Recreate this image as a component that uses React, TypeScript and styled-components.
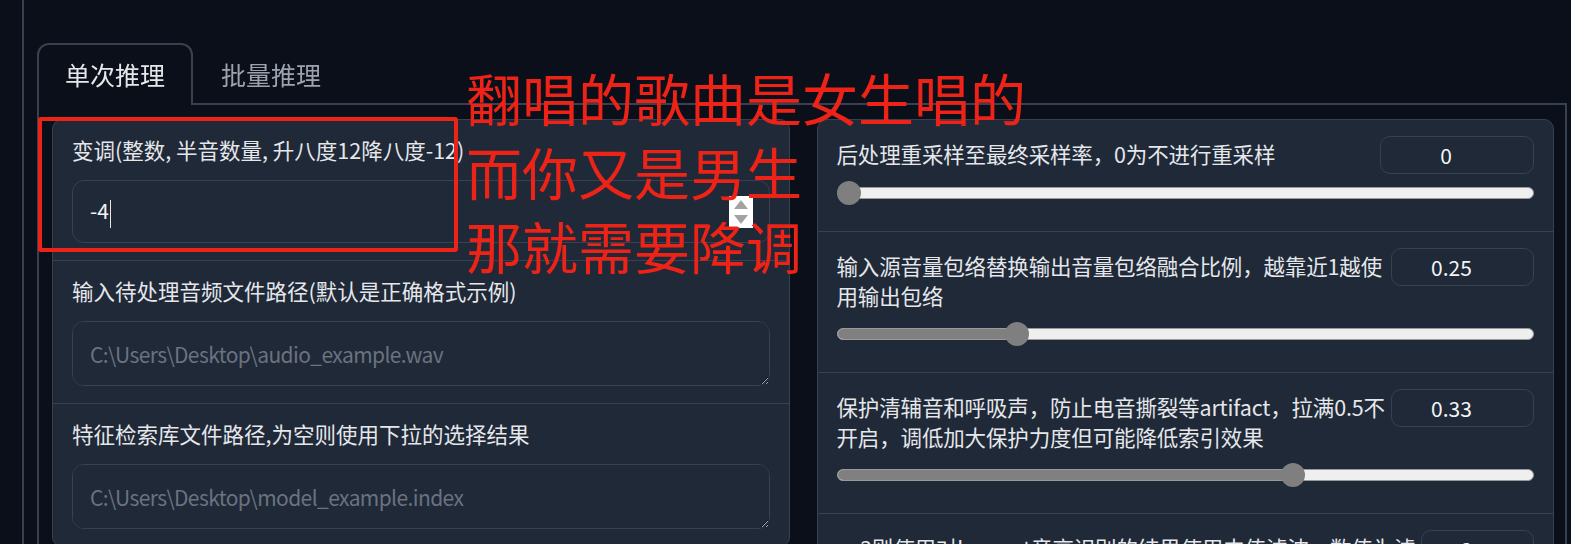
import React from 'react';
import styled, { createGlobalStyle } from 'styled-components';

const GlobalStyle = createGlobalStyle`
	* {
		box-sizing: border-box;
	}

	html,
	body {
		margin: 0;
		padding: 0;
		height: 544px;
		overflow: hidden;
		background: #0b0f19;
	}

	body {
		font-family: 'Noto Sans CJK SC', 'Noto Sans', sans-serif;
		color: #e5e7eb;
	}
`;

const border = '#374151';
const blockBg = '#1f2937';

type SliderProps = { value: number; min: number; max: number };

const Slider = ({ value, min, max }: SliderProps) => {
	const p = (value - min) / (max - min);
	return (
		<SliderWrap>
			<Track>
				<Fill style={{ width: `calc(${p} * (100% - 24px) + 12px)` }} />
			</Track>
			<Thumb style={{ left: `calc(${p} * (100% - 24px))` }} />
		</SliderWrap>
	);
};

type RangeProps = { label: string; value: string; min: number; max: number; boxWidth: number };

const RangeBlock = ({ label, value, min, max, boxWidth }: RangeProps) => (
	<Block $range>
		<Header>
			<RangeLabel>{label}</RangeLabel>
			<NumBox $width={boxWidth}>{value}</NumBox>
		</Header>
		<Slider value={parseFloat(value)} min={min} max={max} />
	</Block>
);

const App = () => {
	return (
		<Page>
			<GlobalStyle />
			<Frame>
				<TabList>
					<Tab $active>单次推理</Tab>
					<Tab>批量推理</Tab>
				</TabList>
				<TabPanel>
					<Card>
						<Block>
							<Label>变调(整数, 半音数量, 升八度12降八度-12)</Label>
							<NumberInput>
								<span>
									-4
									<Caret />
								</span>
								<Spinner width='24' height='32' viewBox='0 0 24 32'>
									<rect width='24' height='32' fill='#ffffff' />
									<polygon points='12,4 19,13 5,13' fill='#a3a3a3' />
									<polygon points='12,28 19,19 5,19' fill='#a3a3a3' />
								</Spinner>
							</NumberInput>
						</Block>
						<Block>
							<Label>输入待处理音频文件路径(默认是正确格式示例)</Label>
							<TextArea placeholder='C:\Users\Desktop\audio_example.wav' />
						</Block>
						<Block>
							<Label>特征检索库文件路径,为空则使用下拉的选择结果</Label>
							<TextArea placeholder='C:\Users\Desktop\model_example.index' />
						</Block>
					</Card>
					<Card>
						<RangeBlock
							label='后处理重采样至最终采样率，0为不进行重采样'
							value='0'
							min={0}
							max={48000}
							boxWidth={154}
						/>
						<RangeBlock
							label='输入源音量包络替换输出音量包络融合比例，越靠近1越使用输出包络'
							value='0.25'
							min={0}
							max={1}
							boxWidth={143}
						/>
						<RangeBlock
							label='保护清辅音和呼吸声，防止电音撕裂等artifact，拉满0.5不开启，调低加大保护力度但可能降低索引效果'
							value='0.33'
							min={0}
							max={0.5}
							boxWidth={143}
						/>
						<RangeBlock
							label='>=3则使用对harvest音高识别的结果使用中值滤波，数值为滤波半径，使用可以削弱哑音'
							value='3'
							min={0}
							max={7}
							boxWidth={113}
						/>
					</Card>
				</TabPanel>
			</Frame>

			{/* red annotation drawn over the screenshot */}
			<RedBox />
			<Note>
				<span>翻唱的歌曲是女生唱的</span>
				<span>而你又是男生</span>
				<span>那就需要降调</span>
			</Note>
		</Page>
	);
};

const Page = styled.div`
	position: relative;
	height: 544px;
	padding: 0 4px 0 22px;
`;

const Frame = styled.div`
	height: 100%;
	padding: 43px 0 0 13px;
	border-left: 2px solid ${border};
`;

const TabList = styled.div`
	display: flex;
	position: relative;
	z-index: 1;
`;

const Tab = styled.button<{ $active?: boolean }>`
	margin: 0 0 ${(p) => (p.$active ? '-2px' : '0')};
	padding: 11px 26px ${(p) => (p.$active ? '13px' : '11px')};

	font-family: inherit;
	font-size: 25px;
	line-height: 36px;
	color: ${(p) => (p.$active ? '#e5e7eb' : '#9ca3af')};

	background: ${(p) => (p.$active ? '#0b0f19' : 'transparent')};
	border: 2px solid ${(p) => (p.$active ? border : 'transparent')};
	border-bottom: none;
	border-radius: 12px 12px 0 0;
`;

const TabPanel = styled.div`
	height: 600px;
	padding: 14px 11px 0 13px;

	display: grid;
	grid-template-columns: 1fr 1fr;
	gap: 27px;
	align-items: start;

	border: 2px solid ${border};
`;

const Card = styled.div`
	background: ${blockBg};
	border: 1px solid ${border};
	border-radius: 10px;
	overflow: hidden;
`;

const Block = styled.div<{ $range?: boolean }>`
	padding: ${(p) => (p.$range ? '16px 19px 26px' : '14px 19px 17px')};

	& + & {
		border-top: 1px solid ${border};
	}
`;

const Label = styled.div`
	margin-bottom: 14px;

	font-size: 21.5px;
	line-height: 32px;
	color: #e5e7eb;
	white-space: nowrap;
`;

const NumberInput = styled.div`
	height: 63px;
	padding: 0 16px 0 17px;

	display: flex;
	align-items: center;
	justify-content: space-between;

	font-size: 21px;
	color: #f3f4f6;

	background: ${blockBg};
	border: 1px solid ${border};
	border-radius: 12px;
`;

const Caret = styled.span`
	display: inline-block;
	width: 1px;
	height: 28px;
	margin-left: 1px;
	vertical-align: middle;
	background: #e5e7eb;
`;

const Spinner = styled.svg`
	display: block;
`;

const TextArea = styled.textarea`
	display: block;
	width: 100%;
	height: 65px;
	padding: 16px 17px;

	font-family: inherit;
	font-size: 21px;
	line-height: 32px;
	letter-spacing: -0.6px;
	color: #e5e7eb;

	background: ${blockBg};
	border: 1px solid ${border};
	border-radius: 12px;
	outline: none;
	resize: vertical;
	color-scheme: dark;

	&::placeholder {
		color: #6b7280;
	}
`;

const Header = styled.div`
	display: flex;
	align-items: flex-start;
	justify-content: space-between;
`;

const RangeLabel = styled.div`
	flex: 1;
	padding: 3px 0 4px;

	font-size: 21.5px;
	line-height: 30px;
	letter-spacing: -0.15px;
	color: #e5e7eb;
`;

const NumBox = styled.div<{ $width: number }>`
	flex: 0 0 ${(p) => p.$width}px;
	height: 38px;
	padding-right: 22px;

	display: flex;
	align-items: center;
	justify-content: center;

	font-size: 21px;
	color: #f3f4f6;

	background: ${blockBg};
	border: 1px solid ${border};
	border-radius: 10px;
`;

const SliderWrap = styled.div`
	position: relative;
	height: 24px;
	margin-top: 7px;
	padding: 6px 0;
`;

const Track = styled.div`
	height: 12px;
	background: #efefef;
	border: 1px solid #9a9a9a;
	border-radius: 6px;
	overflow: hidden;
`;

const Fill = styled.div`
	height: 100%;
	background: #808080;
`;

const Thumb = styled.div`
	position: absolute;
	top: 0;
	width: 24px;
	height: 24px;
	border-radius: 50%;
	background: #7f7f7f;
`;

const RedBox = styled.div`
	position: absolute;
	left: 38px;
	top: 117px;
	width: 420px;
	height: 135px;
	border: 4px solid #ee2318;
	border-radius: 3px;
	pointer-events: none;
`;

const Note = styled.div`
	position: absolute;
	left: 466px;
	top: 60px;

	display: flex;
	flex-direction: column;

	font-size: 56px;
	line-height: 74px;
	color: #ee2318;
	white-space: nowrap;
	pointer-events: none;
`;

export default App;
